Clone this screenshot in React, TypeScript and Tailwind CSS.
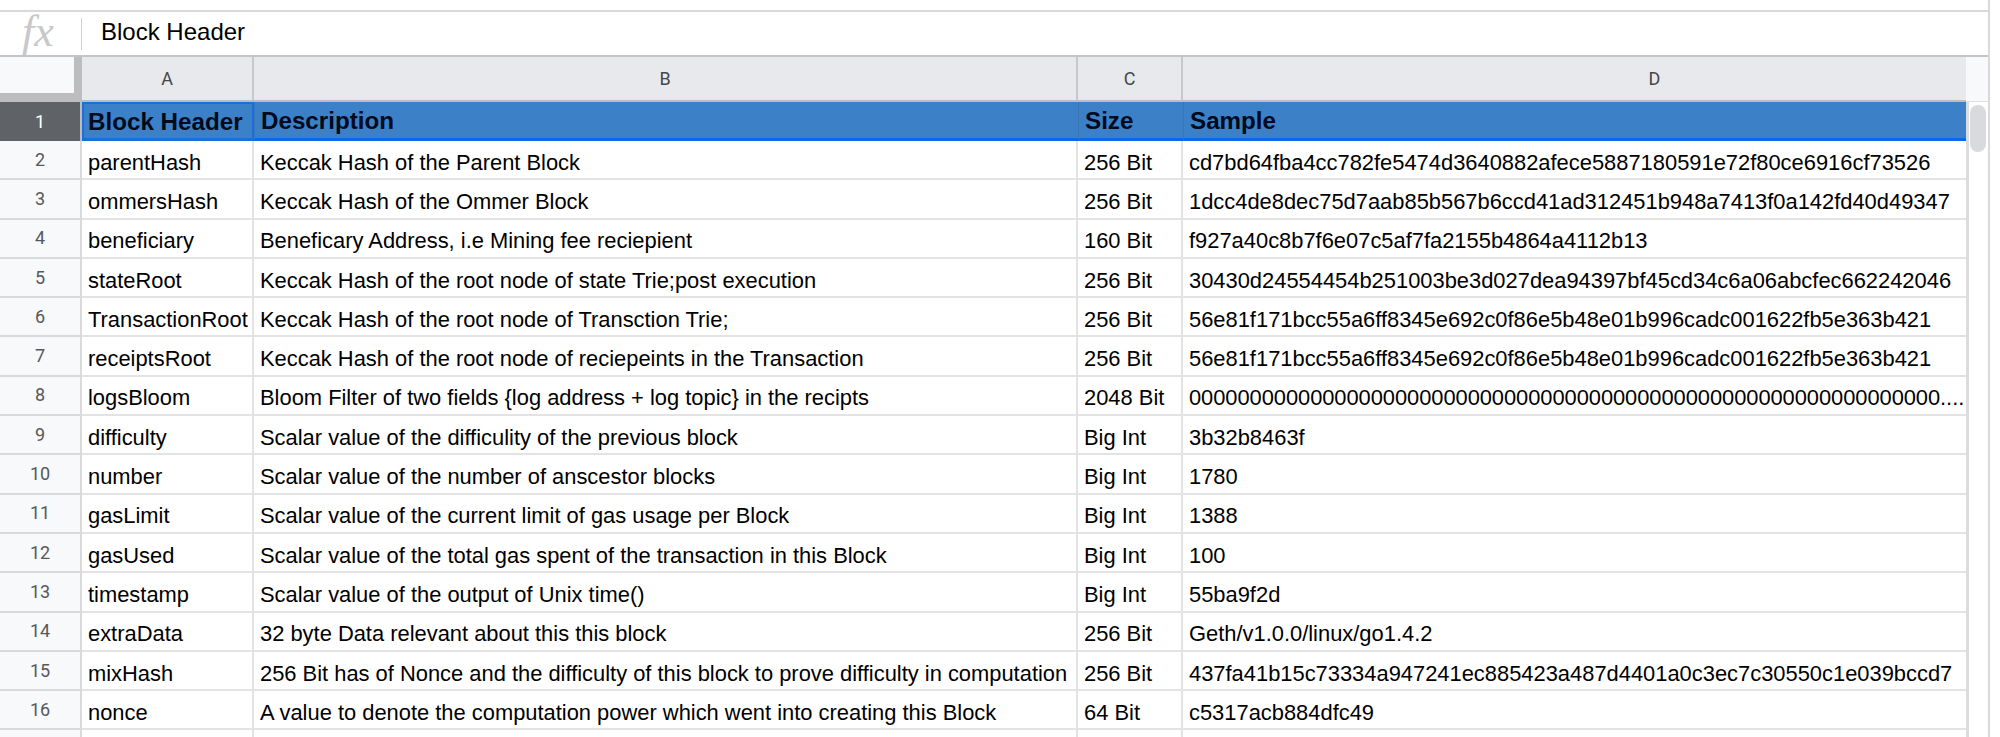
const rows = [
  ['parentHash', 'Keccak Hash of the Parent Block', '256 Bit', 'cd7bd64fba4cc782fe5474d3640882afece5887180591e72f80ce6916cf73526'],
  ['ommersHash', 'Keccak Hash of the Ommer Block', '256 Bit', '1dcc4de8dec75d7aab85b567b6ccd41ad312451b948a7413f0a142fd40d49347'],
  ['beneficiary', 'Beneficary Address, i.e Mining fee reciepient', '160 Bit', 'f927a40c8b7f6e07c5af7fa2155b4864a4112b13'],
  ['stateRoot', 'Keccak Hash of the root node of state Trie;post execution', '256 Bit', '30430d24554454b251003be3d027dea94397bf45cd34c6a06abcfec662242046'],
  ['TransactionRoot', 'Keccak Hash of the root node of Transction Trie;', '256 Bit', '56e81f171bcc55a6ff8345e692c0f86e5b48e01b996cadc001622fb5e363b421'],
  ['receiptsRoot', 'Keccak Hash of the root node of reciepeints in the Transaction', '256 Bit', '56e81f171bcc55a6ff8345e692c0f86e5b48e01b996cadc001622fb5e363b421'],
  ['logsBloom', 'Bloom Filter of two fields {log address + log topic} in the recipts', '2048 Bit', '00000000000000000000000000000000000000000000000000000000000000....'],
  ['difficulty', 'Scalar value of the difficulity of the previous block', 'Big Int', '3b32b8463f'],
  ['number', 'Scalar value of the number of anscestor blocks', 'Big Int', '1780'],
  ['gasLimit', 'Scalar value of the current limit of gas usage per Block', 'Big Int', '1388'],
  ['gasUsed', 'Scalar value of the total gas spent of the transaction in this Block', 'Big Int', '100'],
  ['timestamp', 'Scalar value of the output of Unix time()', 'Big Int', '55ba9f2d'],
  ['extraData', '32 byte Data relevant about this this block', '256 Bit', 'Geth/v1.0.0/linux/go1.4.2'],
  ['mixHash', '256 Bit has of Nonce and the difficulty of this block to prove difficulty in computation', '256 Bit', '437fa41b15c73334a947241ec885423a487d4401a0c3ec7c30550c1e039bccd7'],
  ['nonce', 'A value to denote the computation power which went into creating this Block', '64 Bit', 'c5317acb884dfc49'],
];

const cols = 'grid grid-cols-[82px_172px_824px_105px_783px]';
const cell = 'pl-[6px] pt-[6px] flex items-center overflow-hidden whitespace-nowrap border-b-2 border-[#e2e3e5] text-[21.9px] leading-none text-black';
const letter = "bg-[#e8e9ed] flex items-center justify-center font-['Roboto',sans-serif] text-[18px] text-[#444749]";
const rowNum = "border-r-2 flex items-center justify-center font-['Roboto',sans-serif] text-[18px] leading-none";

export default function App() {
  return (
    <div className="w-[2000px] h-[737px] overflow-hidden bg-white font-['Liberation_Sans',Arial,sans-serif]">
      <div className="w-[1990px] h-full border-r-2 border-[#d9d9dd]">
        <div className="h-[10px]" />
        {/* formula bar */}
        <div className="h-[47px] flex items-center border-t-2 border-b-2 border-t-[#d9d9dd] border-b-[#c4c4c6]">
          <div className="w-[82px] h-[32px] flex items-center justify-center border-r border-[#d0d0d2]">
            <span className="font-['Liberation_Serif',serif] italic text-[44px] leading-none text-[#c8c8ca] pb-[4px] pr-[5px]">fx</span>
          </div>
          <span className="ml-[19px] pb-[3px] text-[24px] text-black">Block Header</span>
        </div>

        <div className="flex">
          <div className="w-[1966px]">
            {/* column letters */}
            <div className={cols + ' h-[45px] border-b-2 border-[#bdbdbf]'}>
              <div className="bg-[#f8f9fa] border-r-[8px] border-[#bdbdbf] shadow-[inset_0_-7px_0_#bdbdbf]" />
              <div className={letter + ' border-r-2 border-[#c8c8cb]'}>A</div>
              <div className={letter + ' border-r-2 border-[#c8c8cb]'}>B</div>
              <div className={letter + ' border-r-2 border-[#c8c8cb]'}>C</div>
              <div className={letter + ' pl-[160px]'}>D</div>
            </div>

            {/* header row */}
            <div className={cols + ' h-[39px]'}>
              <div className={rowNum + ' bg-[#5f6368] border-[#bdbdbf] text-white'}>1</div>
              {['Block Header', 'Description', 'Size', 'Sample'].map((label, i) => (
                <div
                  key={label}
                  className={
                    'bg-[#3c80c8] border-b-[3px] border-[#0b68e6] pt-[2px] flex items-center font-bold text-[24.2px] leading-none text-[#000a1a] whitespace-nowrap ' +
                    (i === 0 ? 'pl-[4px] border-2 border-b-[3px] border-[#1a6fe0]' : 'pl-[6px] border-l border-l-[#3a76b6]')
                  }
                >
                  {label}
                </div>
              ))}
            </div>

            {rows.map((r, i) => (
              <div key={r[0]} className={cols + ' h-[39.3px]'}>
                <div className={rowNum + ' bg-[#f8f9fa] border-b-2 border-[#d9dadc] text-[#55585c]'}>
                  {i + 2}
                </div>
                {r.map((text, j) => (
                  <div
                    key={j}
                    className={
                      cell +
                      (j < 3 ? ' border-r-2' : '') +
                      (r[0] === 'logsBloom' && j === 3 ? ' tracking-[-0.06px]' : '')
                    }
                  >
                    {text}
                  </div>
                ))}
              </div>
            ))}

            {/* next row, cut off by the bottom of the window */}
            <div className={cols + ' h-[39.3px]'}>
              <div className="bg-[#f8f9fa] border-r-2 border-[#d9dadc]" />
              <div className="border-r-2 border-[#e2e3e5]" />
              <div className="border-r-2 border-[#e2e3e5]" />
              <div className="border-r-2 border-[#e2e3e5]" />
              <div />
            </div>
          </div>

          {/* scrollbar */}
          <div className="w-[22px]">
            <div className="h-[45px] bg-[#f8f9fa] border-b border-[#e0e0e2]" />
            <div className="h-[640px] border-l-[3px] border-[#dcdcdf] pl-[1px] pt-[3px]">
              <div className="w-[16px] h-[47px] rounded-[8px] bg-[#d9dadd]" />
            </div>
          </div>
        </div>
      </div>
    </div>
  );
}
